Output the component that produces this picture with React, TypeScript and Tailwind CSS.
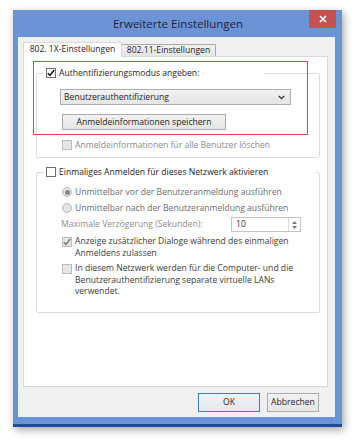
import React from 'react';

const Check: React.FC<{ checked?: boolean; disabled?: boolean }> = ({ checked, disabled }) => (
  <span
    className={
      disabled
        ? 'w-[10px] h-[10px] shrink-0 border border-[#bcbcbc] bg-[#e6e6e6] flex items-center justify-center'
        : 'w-[10px] h-[10px] shrink-0 border border-[#707070] bg-white flex items-center justify-center'
    }
  >
    {checked && (
      <svg width="8" height="8" viewBox="0 0 8 8">
        <path d="M0.8 4.2 L3 6.4 L7.2 1" fill="none" stroke={disabled ? '#7a7a7a' : '#111'} strokeWidth="1.5" />
      </svg>
    )}
  </span>
);

const Radio: React.FC<{ checked?: boolean }> = ({ checked }) => (
  <span className="w-[10px] h-[10px] shrink-0 rounded-full border border-[#bcbcbc] bg-[#e6e6e6] flex items-center justify-center">
    {checked && <span className="w-[5px] h-[5px] rounded-full bg-[#8a8a8a]" />}
  </span>
);

export default function App() {
  return (
    <div className="w-[359px] h-[443px] bg-white pl-[13px] pt-[10px] font-['Open_Sans',sans-serif] text-[8.6px] text-[#1e1e1e]">
      <div className="w-[329px] h-[417px] bg-[#6b93d6] flex flex-col shadow-[2px_3px_8px_rgba(0,0,0,0.35)]">
        {/* title bar */}
        <div className="h-[27px] relative flex items-center justify-center text-[11.5px] text-[#1f2633]">
          <span className="pt-[1px] pl-[1px]">Erweiterte Einstellungen</span>
          <div className="absolute right-[6px] top-0 w-[27px] h-[18px] bg-[#c75050] flex items-center justify-center">
            <svg width="8" height="8" viewBox="0 0 8 8">
              <path d="M1 1 L7 7 M7 1 L1 7" stroke="white" strokeWidth="1.7" />
            </svg>
          </div>
        </div>

        <div className="ml-[5px] mr-[7px] h-[380px] bg-[#f0f0f0] pt-[5px] pl-[5px] pr-[7px] flex flex-col">
          {/* tabs */}
          <div className="flex items-end h-[14px]">
            <div className="relative z-10 w-[99px] h-[15px] -mb-[1px] bg-white border border-b-0 border-[#d9d9d9] flex items-center justify-center pb-[1px]">
              802. 1X-Einstellungen
            </div>
            <div className="w-[94px] h-[12px] bg-gradient-to-b from-[#f0f0f0] to-[#e5e5e5] border border-l-0 border-b-0 border-[#acacac] flex items-center justify-center">
              802.11-Einstellungen
            </div>
          </div>

          {/* panel */}
          <div className="relative h-[331px] bg-white border border-[#d9d9d9] pl-[12px]">
            <fieldset className="mt-[10px] w-[284px] border border-[#dcdcdc] rounded-[2px] pb-[7px]">
              <legend className="ml-[7px] w-[220px] h-[12px] pl-[2px] flex items-center gap-[3px]">
                <Check checked />
                <span>Authentifizierungsmodus angeben:</span>
              </legend>
              <div className="pl-[25px]">
                <div className="mt-[10px] -ml-[2px] w-[231px] h-[16px] border border-[#acacac] bg-gradient-to-b from-[#f2f2f2] to-[#e5e5e5] flex items-center justify-between pl-[3px] pr-[5px]">
                  <span>Benutzerauthentifizierung</span>
                  <svg width="7" height="5" viewBox="0 0 7 5">
                    <path d="M0.8 1 L3.5 3.6 L6.2 1" fill="none" stroke="#333" strokeWidth="1.3" />
                  </svg>
                </div>
                <div className="mt-[9px] w-[164px] h-[16px] border border-[#acacac] bg-gradient-to-b from-[#f2f2f2] to-[#e5e5e5] flex items-center justify-center">
                  Anmeldeinformationen speichern
                </div>
                <div className="mt-[10px] h-[10px] flex items-center gap-[3px] text-[#8d8d8d]">
                  <Check disabled />
                  <span>Anmeldeinformationen für alle Benutzer löschen</span>
                </div>
              </div>
            </fieldset>

            <fieldset className="mt-[8px] w-[284px] border border-[#dcdcdc] rounded-[2px] pb-[14px]">
              <legend className="ml-[7px] w-[272px] h-[12px] pl-[2px] flex items-center gap-[3px]">
                <Check />
                <span>Einmaliges Anmelden für dieses Netzwerk aktivieren</span>
              </legend>
              <div className="pl-[25px]">
                <div className="mt-[9px] h-[10px] flex items-center gap-[3px] text-[#6d6d6d]">
                  <Radio checked />
                  <span>Unmittelbar vor der Benutzeranmeldung ausführen</span>
                </div>
                <div className="mt-[6px] h-[10px] flex items-center gap-[3px] text-[#6d6d6d]">
                  <Radio />
                  <span>Unmittelbar nach der Benutzeranmeldung ausführen</span>
                </div>
                <div className="mt-[4px] -ml-[1px] h-[15px] flex items-center text-[#8d8d8d]">
                  <span className="w-[170px]">Maximale Verzögerung (Sekunden):</span>
                  <div className="w-[70px] h-[15px] border border-[#c4c4c4] bg-white flex items-center justify-between pl-[4px] text-[#333]">
                    <span>10</span>
                    <div className="w-[12px] h-[13px] border-l border-[#d9d9d9] flex flex-col items-center justify-center gap-[2px]">
                      <svg width="5" height="3" viewBox="0 0 5 3"><path d="M0 3 L2.5 0 L5 3 Z" fill="#777" /></svg>
                      <svg width="5" height="3" viewBox="0 0 5 3"><path d="M0 0 L2.5 3 L5 0 Z" fill="#777" /></svg>
                    </div>
                  </div>
                </div>
                <div className="mt-[4px] flex items-start gap-[3px] leading-[11.5px] text-[#3c3c3c]">
                  <span className="mt-[1px]"><Check checked disabled /></span>
                  <span>
                    Anzeige zusätzlicher Dialoge während des einmaligen
                    <br />
                    Anmeldens zulassen
                  </span>
                </div>
                <div className="mt-[4px] flex items-start gap-[3px] leading-[11.5px] text-[#3c3c3c]">
                  <span className="mt-[1px]"><Check disabled /></span>
                  <span>
                    In diesem Netzwerk werden für die Computer- und die
                    <br />
                    Benutzerauthentifizierung separate virtuelle LANs
                    <br />
                    verwendet.
                  </span>
                </div>
              </div>
            </fieldset>

            {/* annotation */}
            <div className="absolute left-[9px] top-[4px] w-[275px] h-[74px] border-[1.5px] border-[#e0464c]" />
          </div>

          {/* buttons */}
          <div className="mt-[6px] mr-[9px] flex justify-end gap-[7px]">
            <div className="w-[62px] h-[19px] border border-[#3c7fb1] bg-gradient-to-b from-[#f0f4f9] to-[#e3e8ee] flex items-center justify-center">
              OK
            </div>
            <div className="w-[52px] h-[19px] border border-[#acacac] bg-gradient-to-b from-[#f2f2f2] to-[#e5e5e5] flex items-center justify-center">
              Abbrechen
            </div>
          </div>
        </div>

        <div className="mt-auto h-[3px] bg-[#1f4b9c]" />
      </div>
    </div>
  );
}
